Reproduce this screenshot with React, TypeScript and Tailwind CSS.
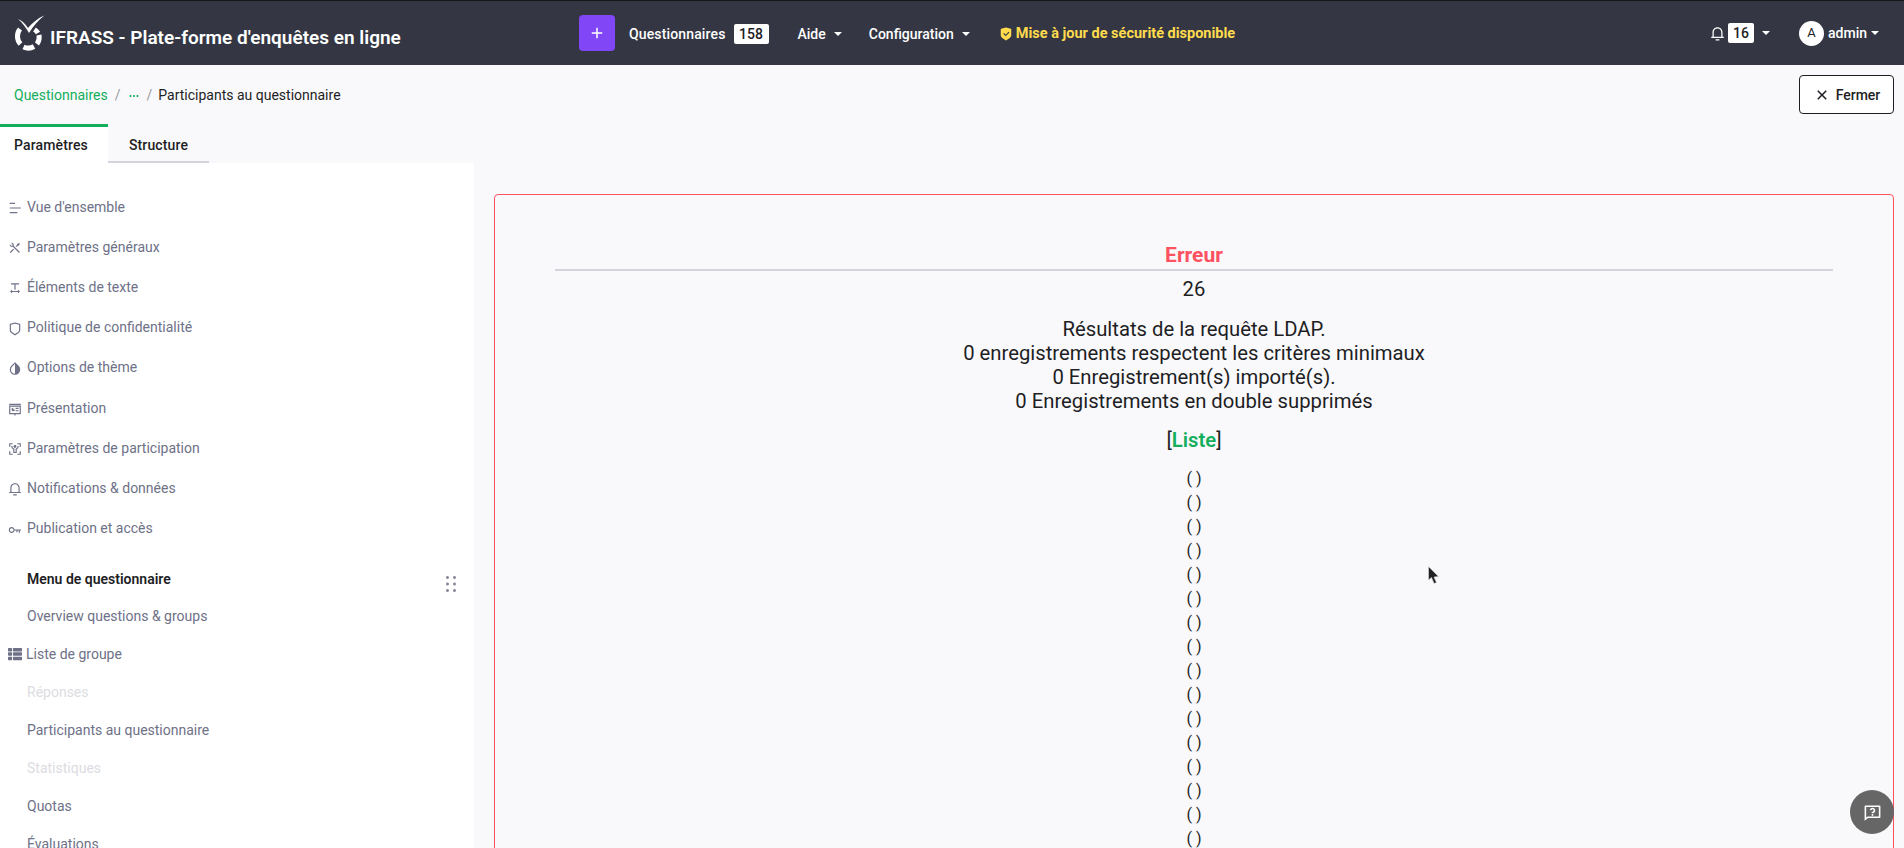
import {
  RiBarChartHorizontalLine,
  RiToolsLine,
  RiTextSpacing,
  RiShieldLine,
  RiContrastDropFill,
  RiSlideshowLine,
  RiBodyScanLine,
  RiNotification3Line,
  RiKey2Line,
  RiCloseLine,
  RiShieldCheckFill,
  RiQuestionnaireLine,
  RiDraggable,
  RiMoreFill,
  RiAddLine,
} from 'react-icons/ri';
import { FaThList } from 'react-icons/fa';

const settingsItems = [
  { label: "Vue d'ensemble", Icon: RiBarChartHorizontalLine, iconClass: '' },
  { label: 'Paramètres généraux', Icon: RiToolsLine, iconClass: '' },
  { label: 'Éléments de texte', Icon: RiTextSpacing, iconClass: '' },
  { label: 'Politique de confidentialité', Icon: RiShieldLine, iconClass: '' },
  { label: 'Options de thème', Icon: RiContrastDropFill, iconClass: '' },
  { label: 'Présentation', Icon: RiSlideshowLine, iconClass: '' },
  { label: 'Paramètres de participation', Icon: RiBodyScanLine, iconClass: '' },
  { label: 'Notifications & données', Icon: RiNotification3Line, iconClass: '' },
  { label: 'Publication et accès', Icon: RiKey2Line, iconClass: 'rotate-45' },
];

const menuItems = [
  { label: 'Overview questions & groups', disabled: false },
  { label: 'Réponses', disabled: true },
  { label: 'Participants au questionnaire', disabled: false },
  { label: 'Statistiques', disabled: true },
  { label: 'Quotas', disabled: false },
  { label: 'Évaluations', disabled: false },
];

const Caret = () => (
  <span className="ml-2 h-0 w-0 border-x-[4px] border-t-[4px] border-x-transparent border-t-white" />
);

const Logo = () => (
  <svg viewBox="0 0 30 36" className="h-[36px] w-[30px] shrink-0" fill="none">
    <path
      d="M4 4 C7 5 11 8 14 13 C18 8 24 3 31 0 C25 5 20 10 15 18 C12 13 9 8 4 4 Z"
      fill="#fff"
    />
    <g stroke="#fff" strokeWidth="5">
      <path d="M6 14 A11.500 11.500 0 0 0 6.500 29" />
      <path d="M9.500 32 A11.500 11.500 0 0 0 20 31.500" />
      <path d="M23 29 A11.500 11.500 0 0 0 25 20" />
      <path d="M24 18 A11.500 11.500 0 0 0 20.500 14.500" />
    </g>
  </svg>
);

const Cursor = () => (
  <svg
    viewBox="0 0 12 19"
    className="absolute left-[1428px] top-[566px] h-[19px] w-[12px]"
  >
    <path
      d="M0.500 0.500 L0.500 14 L3.500 11.500 L6 17.500 L8.500 16.500 L6 11 L10.500 10.500 Z"
      fill="#222"
      stroke="#ddd"
      strokeWidth="0.6"
    />
  </svg>
);

export default function App() {
  const rows = Array.from({ length: 16 }, (_, i) => i);

  return (
    <div className="relative h-screen overflow-hidden bg-[#f9f9fb] font-['Roboto',sans-serif] text-[14px] text-[#1e1e24]">
      <header className="flex h-[65px] items-center border-t border-[#14161a] bg-[#343743] pr-[25px] text-white">
        <div className="ml-[14px] flex w-[565px] items-center">
          <Logo />
          <span className="ml-[6px] mt-[11px] text-[19px] font-semibold">
            IFRASS - Plate-forme d'enquêtes en ligne
          </span>
        </div>
        <button className="flex h-[36px] w-[36px] items-center justify-center rounded-[4px] bg-[#8146f6]">
          <RiAddLine size={18} />
        </button>
        <div className="mt-[2px] flex items-center">
          <span className="ml-[14px] font-medium tracking-[0.01em]">Questionnaires</span>
          <span className="ml-[8px] flex h-[20px] w-[35px] items-center justify-center rounded-[2px] bg-white text-[14px] font-medium text-[#1e1e24]">
            158
          </span>
          <span className="ml-[29px] flex items-center font-medium">
            Aide
            <Caret />
          </span>
          <span className="ml-[27px] flex items-center font-medium">
            Configuration
            <Caret />
          </span>
          <span className="ml-[29px] flex items-center text-[14.5px] font-bold text-[#ffdb4d]">
            <RiShieldCheckFill size={14} className="mr-[3px]" />
            Mise à jour de sécurité disponible
          </span>
        </div>
        <div className="ml-auto flex items-center">
          <RiNotification3Line size={15} />
          <span className="ml-[3px] flex h-[20px] w-[26px] items-center justify-center rounded-[2px] bg-white text-[14px] font-medium text-[#1e1e24]">
            16
          </span>
          <Caret />
          <span className="ml-[29px] flex h-[25px] w-[25px] items-center justify-center rounded-full bg-white text-[13px] text-[#1e1e24]">
            A
          </span>
          <span className="ml-[4px] font-medium">admin</span>
          <span className="-ml-[4px] flex items-center">
            <Caret />
          </span>
        </div>
      </header>

      <div className="flex h-[59px] items-start justify-between pr-[10px] pt-[10px]">
        <nav className="ml-[14px] mt-[10px] flex items-center text-[14px]">
          <span className="text-[#14ae5c]">Questionnaires</span>
          <span className="mx-[7px] text-[#9a9aa5]">/</span>
          <RiMoreFill size={12} className="text-[#14ae5c]" />
          <span className="mx-[7px] text-[#9a9aa5]">/</span>
          <span className="-ml-[1px]">Participants au questionnaire</span>
        </nav>
        <button className="flex h-[39px] w-[95px] items-center justify-center rounded-[4px] border border-[#1e1e24] bg-white pt-[1px] font-medium">
          <RiCloseLine size={18} className="mr-[5px]" />
          Fermer
        </button>
      </div>

      <div className="flex">
        <aside className="w-[474px] shrink-0">
          <div className="flex h-[39px] font-medium tracking-[0.01em]">
            <div className="flex w-[108px] items-center border-t-[3px] border-[#14ae5c] bg-white pl-[14px]">
              Paramètres
            </div>
            <div className="flex w-[101px] items-center justify-center border-b-[2px] border-[#d4d4dc] pt-[5px]">
              Structure
            </div>
          </div>
          <div className="h-[700px] bg-white pl-[8px] pt-[24px] text-[#6e7187]">
            {settingsItems.map(({ label, Icon, iconClass }) => (
              <div key={label} className="flex h-[40.200px] items-center">
                <Icon size={14} className={`mr-[5px] mt-[2px] shrink-0 ${iconClass}`} />
                {label}
              </div>
            ))}
            <div className="relative ml-[19px] mt-[11px] flex h-[39px] items-center font-semibold text-[#1e1e24]">
              Menu de questionnaire
              <RiDraggable
                size={24}
                className="absolute left-[412px] top-[12px] text-[#8a8a9a]"
              />
            </div>
            <div className="ml-[19px] flex h-[36px] items-center">
              {menuItems[0].label}
            </div>
            <div className="flex h-[39px] items-center">
              <FaThList size={14} className="mr-[4px]" />
              Liste de groupe
            </div>
            {menuItems.slice(1).map((item) => (
              <div
                key={item.label}
                className={`ml-[19px] flex h-[38px] items-center ${
                  item.disabled ? 'text-[#dcdce2]' : ''
                }`}
              >
                {item.label}
              </div>
            ))}
          </div>
        </aside>

        <main className="min-w-0 flex-1 pl-[20px] pr-[10px] pt-[70px]">
          <div className="rounded-[4px] border border-[#ff515f] px-[60px] pb-[40px] pt-[48px] text-center text-[20.25px]">
            <div className="border-b-2 border-[#d4d4dc] pb-[1px] text-[21px] leading-[25px] font-bold text-[#ff515f]">
              Erreur
            </div>
            <p className="mt-[5px] leading-[27px]">26</p>
            <p className="mt-[14px] leading-[24px]">
              Résultats de la requête LDAP.
              <br />0 enregistrements respectent les critères minimaux
              <br />0 Enregistrement(s) importé(s).
              <br />0 Enregistrements en double supprimés
            </p>
            <p className="mt-[14px] leading-[27px]">
              [<span className="font-semibold text-[#14ae5c]">Liste</span>]
            </p>
            <div className="mt-[13px] text-[16px]">
              {rows.map((row) => (
                <div key={row} className="h-[24px] leading-[24px]">
                  ( )
                </div>
              ))}
            </div>
          </div>
        </main>
      </div>

      <Cursor />
      <button className="absolute left-[1850px] top-[790px] flex h-[44px] w-[44px] items-center justify-center rounded-full bg-[#666] text-white">
        <RiQuestionnaireLine size={19} />
      </button>
    </div>
  );
}
